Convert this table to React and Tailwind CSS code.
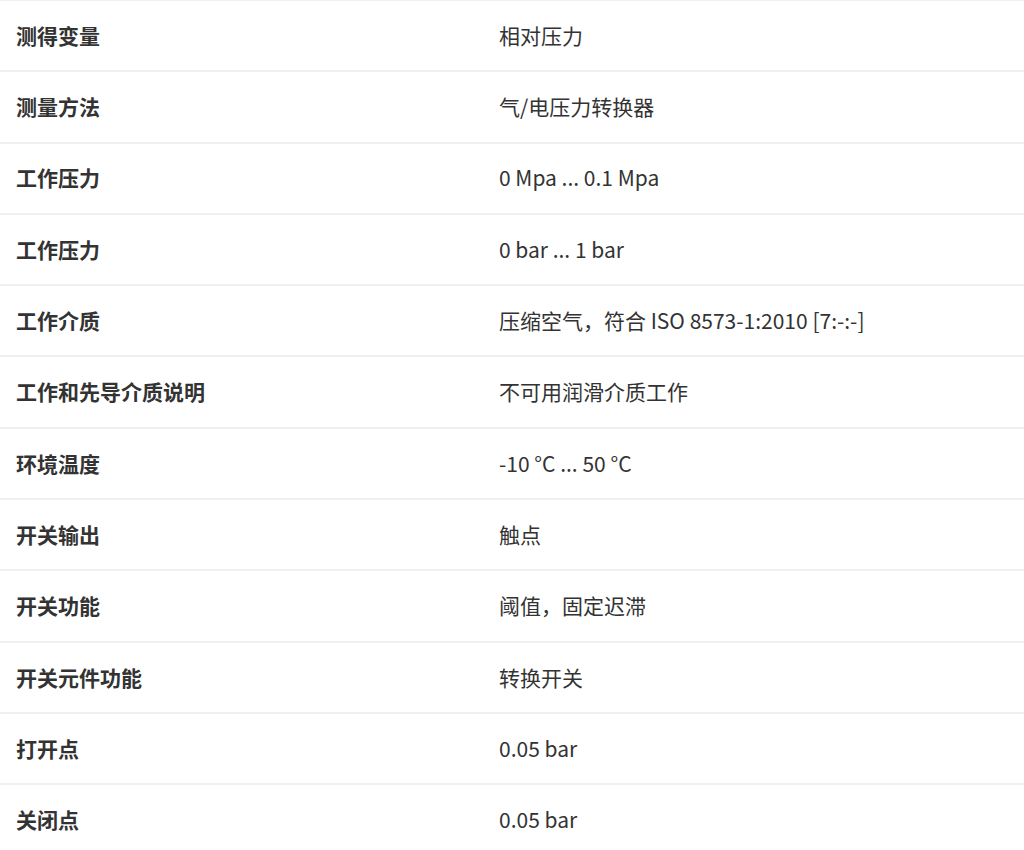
const rows = [
  ['测得变量', '相对压力'],
  ['测量方法', '气/电压力转换器'],
  ['工作压力', '0 Mpa ... 0.1 Mpa'],
  ['工作压力', '0 bar ... 1 bar'],
  ['工作介质', '压缩空气，符合 ISO 8573-1:2010 [7:-:-]'],
  ['工作和先导介质说明', '不可用润滑介质工作'],
  ['环境温度', '-10 °C ... 50 °C'],
  ['开关输出', '触点'],
  ['开关功能', '阈值，固定迟滞'],
  ['开关元件功能', '转换开关'],
  ['打开点', '0.05 bar'],
  ['关闭点', '0.05 bar'],
]

export default function App() {
  return (
    <div
      className="w-[1024px] bg-white text-[#333] border-t border-[#efefef]"
      style={{ fontFamily: '"Noto Sans CJK SC", "Open Sans", sans-serif' }}
    >
      {rows.map(([label, value], i) => (
        <div
          key={i}
          className="grid grid-cols-[483px_1fr] h-[71.3px] border-b-2 border-[#efefef] items-center text-[21px] leading-[1.5]"
        >
          <div className="px-4 font-bold">{label}</div>
          <div className="px-4">{value}</div>
        </div>
      ))}
    </div>
  )
}
